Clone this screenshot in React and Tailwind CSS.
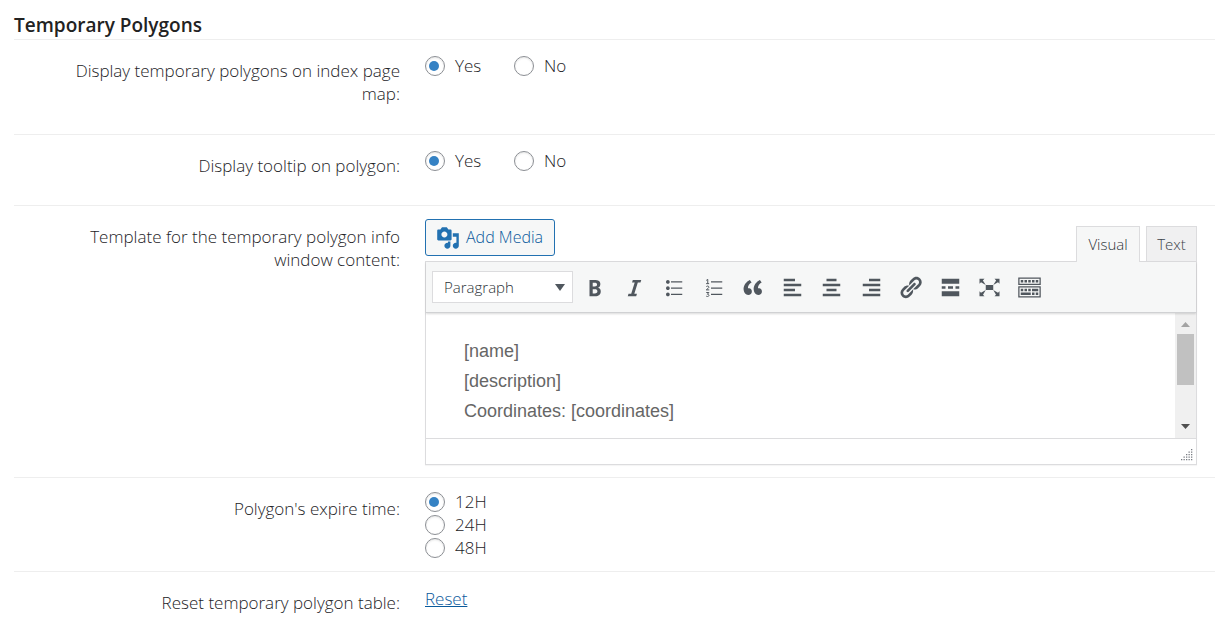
import React from "react";

const ICONS = {
  bold: "M6 4v13h4.54c1.37 0 2.46-.33 3.26-1 .8-.66 1.2-1.58 1.2-2.77 0-.84-.17-1.51-.51-2.01s-.9-.85-1.67-1.03v-.09c.57-.1 1.02-.4 1.36-.9s.51-1.13.51-1.91c0-1.14-.39-1.98-1.17-2.5C12.75 4.26 11.5 4 9.78 4H6zm2.57 5.15V6.26h1.36c.73 0 1.27.11 1.61.32.34.22.51.58.51 1.07 0 .54-.16.92-.47 1.15s-.82.35-1.51.35h-1.5zm0 2.19h1.6c1.44 0 2.16.53 2.16 1.61 0 .6-.17 1.05-.51 1.34s-.86.43-1.57.43H8.57v-3.38z",
  italic: "M14.78 6h-2.13l-2.8 9h2.12l-.62 2H4.6l.62-2h2.14l2.8-9H8.03l.62-2h6.75z",
  bullets: "M5.5 7C4.67 7 4 6.33 4 5.5 4 4.68 4.67 4 5.5 4 6.32 4 7 4.68 7 5.5 7 6.33 6.32 7 5.5 7zM8 5h9v1H8V5zm-2.5 7c-.83 0-1.5-.67-1.5-1.5C4 9.68 4.67 9 5.5 9c.82 0 1.5.68 1.5 1.5 0 .83-.68 1.5-1.5 1.5zM8 10h9v1H8v-1zm-2.5 7c-.83 0-1.5-.67-1.5-1.5 0-.82.67-1.5 1.5-1.5.82 0 1.5.68 1.5 1.5 0 .83-.68 1.5-1.5 1.5zM8 15h9v1H8v-1z",
  quote: "M9.49 13.22c0-.74-.2-1.38-.61-1.9-.62-.78-1.83-.88-2.53-.72-.29-1.65 1.11-3.75 2.92-4.65L7.88 4c-2.73 1.3-5.42 4.28-4.96 8.05C3.21 14.43 4.59 16 6.54 16c.85 0 1.56-.25 2.12-.75s.83-1.18.83-2.03zm8.05 0c0-.74-.2-1.38-.61-1.9-.63-.78-1.83-.88-2.53-.72-.29-1.65 1.11-3.75 2.92-4.65L15.93 4c-2.73 1.3-5.41 4.28-4.95 8.05.29 2.38 1.66 3.95 3.61 3.95.85 0 1.56-.25 2.12-.75s.83-1.18.83-2.03z",
  left: "M12 5V3H3v2h9zm5 4V7H3v2h14zm-5 4v-2H3v2h9zm5 4v-2H3v2h14z",
  center: "M14 5V3H6v2h8zm3 4V7H3v2h14zm-3 4v-2H6v2h8zm3 4v-2H3v2h14z",
  right: "M17 5V3H8v2h9zm0 4V7H3v2h14zm0 4v-2H8v2h9zm0 4v-2H3v2h14z",
  link: "M17.74 2.76c1.68 1.69 1.68 4.41 0 6.1l-1.53 1.52c-1.12 1.12-2.7 1.47-4.14 1.09l2.62-2.61.76-.77.76-.76c.84-.84.84-2.2 0-3.04-.84-.85-2.2-.85-3.04 0l-.77.76-3.38 3.38c-.37-1.44-.02-3.02 1.1-4.14l1.52-1.53c1.69-1.68 4.42-1.68 6.1 0zM8.59 13.43l5.34-5.34c.42-.42.42-1.1 0-1.52-.44-.43-1.13-.39-1.53 0l-5.33 5.34c-.42.42-.42 1.1 0 1.52.44.43 1.13.39 1.52 0zm-.76 2.29l4.14-4.15c.38 1.44.03 3.02-1.09 4.14l-1.52 1.53c-1.69 1.68-4.41 1.68-6.1 0-1.68-1.68-1.68-4.42 0-6.1l1.53-1.52c1.12-1.12 2.7-1.47 4.14-1.1l-4.14 4.15c-.85.84-.85 2.2 0 3.05.84.84 2.2.84 3.04 0z",
  more: "M17 7V3H3v4h14zM6 11V9H3v2h3zm6 0V9H8v2h4zm5 0V9h-3v2h3zm0 6v-4H3v4h14z",
  expand: "M7 8h6v4H7zm-5 5v4h4l-1.2-1.2L7 12l-3.8 2.2zM14 17h4v-4l-1.2 1.2L13 12l2.2 3.8zM14 3l1.3 1.3L13 8l3.8-2.2L18 7V3zM6 3H2v4l1.2-1.2L7 8 4.7 4.3z",
  toggle: "M19 2v6H1V2h18zm-1 5V3H2v4h16zM5 4v2H3V4h2zm3 0v2H6V4h2zm3 0v2H9V4h2zm3 0v2h-2V4h2zm3 0v2h-2V4h2zm2 5v9H1V9h18zm-1 8v-7H2v7h16zM5 11v2H3v-2h2zm3 0v2H6v-2h2zm3 0v2H9v-2h2zm6 0v2h-5v-2h5zm-6 3v2H3v-2h8zm3 0v2h-2v-2h2zm3 0v2h-2v-2h2z",
  media: "M13 11V4c0-.55-.45-1-1-1h-1.67L9 1H5L3.67 3H2c-.55 0-1 .45-1 1v7c0 .55.45 1 1 1h10c.55 0 1-.45 1-1zM7 4.5c1.38 0 2.5 1.12 2.5 2.5S8.38 9.5 7 9.5 4.5 8.38 4.5 7 5.62 4.5 7 4.5zM14 6h5v10.5c0 1.38-1.12 2.5-2.5 2.5S14 17.88 14 16.5s1.12-2.5 2.5-2.5c.17 0 .34.02.5.05V9h-3V6zm-4 8.05V13h2v3.5c0 1.38-1.12 2.5-2.5 2.5S7 17.88 7 16.5 8.12 14 9.5 14c.17 0 .34.02.5.05z",
};

const TOOLS = [
  ["Bold", "bold"],
  ["Italic", "italic"],
  ["Bulleted list", "bullets"],
  ["Numbered list", "numbers"],
  ["Blockquote", "quote"],
  ["Align left", "left"],
  ["Align center", "center"],
  ["Align right", "right"],
  ["Insert link", "link"],
  ["Insert Read More tag", "more"],
  ["Fullscreen", "expand"],
  ["Toolbar Toggle", "toggle"],
];

function Icon({ name, className }) {
  return (
    <svg viewBox="0 0 20 20" className={className} aria-hidden="true" fill="currentColor">
      {name === "numbers" ? (
        <>
          <path d="M8 5h9v1H8zM8 10h9v1H8zM8 15h9v1H8z" />
          <path
            d="M4.2 4.3l1.2-.8v3.4M4.1 6.9h2.4M4.2 9.4c.3-.8 2.1-.8 2.1.3 0 .8-1.3 1.4-2.1 2.2h2.4M4.2 14h2.1l-1.2 1.4c1.8 0 1.6 1.8.1 1.8-.5 0-.8-.1-1.1-.4"
            fill="none"
            stroke="currentColor"
            strokeWidth="0.8"
          />
        </>
      ) : (
        <path d={ICONS[name]} />
      )}
    </svg>
  );
}

function Radio({ name, label, checked, className = "" }) {
  return (
    <label className={`flex items-center gap-[10px] ${className}`}>
      <input
        type="radio"
        name={name}
        defaultChecked={checked}
        className="flex size-5 shrink-0 appearance-none items-center rounded-full border border-[#8c8f94] bg-white shadow-[inset_0_1px_2px_rgba(0,0,0,0.1)] checked:before:ml-[3px] checked:before:size-[10px] checked:before:rounded-full checked:before:bg-[#3582c4] checked:before:content-['']"
      />
      <span>{label}</span>
    </label>
  );
}

function Row({ label, htmlFor, id, children, className = "" }) {
  const Tag = htmlFor ? "label" : "div";
  return (
    <div className={`grid grid-cols-[386px_1fr] gap-[25px] border-b border-[#eeeeee] ${className}`}>
      <Tag id={id} htmlFor={htmlFor} className="pt-[19px] pl-8 text-right">
        {label}
      </Tag>
      {children}
    </div>
  );
}

function YesNo({ name, labelledBy }) {
  return (
    <div role="radiogroup" aria-labelledby={labelledBy} className="flex items-start pt-[14px]">
      <Radio name={name} label="Yes" checked className="w-[89px]" />
      <Radio name={name} label="No" />
    </div>
  );
}

function Editor() {
  return (
    <div className="pt-[13px] pr-[18px] pb-3">
      <div className="flex items-end justify-between">
        <button
          type="button"
          className="mb-[5px] flex h-[37px] w-[130px] items-center gap-[6px] rounded-[3px] border border-[#2271b1] bg-[#f6f7f7] pl-[10px] text-[16px] text-[#0a5a9c]"
        >
          <Icon name="media" className="size-6 text-[#2271b1]" />
          Add Media
        </button>
        <div className="flex gap-[6px] text-[15px] text-[#2c3338]">
          <button
            type="button"
            className="relative z-10 -mb-px h-9 w-16 border border-b-0 border-[#dcdcde] bg-[#f6f7f7]"
          >
            Visual
          </button>
          <button type="button" className="h-[35px] w-[51px] border border-b-0 border-[#dcdcde] bg-[#f0f0f1] text-[#3c434a]">
            Text
          </button>
        </div>
      </div>
      <div className="border border-[#dcdcde] shadow-[0_1px_1px_rgba(0,0,0,0.04)]">
        <div className="relative flex h-[51px] items-center border-b border-[#d0d1d3] bg-[#f6f7f7] pl-[6px] text-[#50575e] shadow-[0_1px_2px_rgba(0,0,0,0.15)]">
          <div className="relative">
            <select
              aria-label="Block format"
              className="block h-8 w-[141px] appearance-none border border-[#dcdcde] bg-white pl-[11px] text-[15px] text-[#2c3338]"
            >
              <option>Paragraph</option>
            </select>
            <svg viewBox="0 0 10 7" className="pointer-events-none absolute top-[13px] right-2 h-[7px] w-[10px]" fill="currentColor" aria-hidden="true">
              <path d="M0 0h10L5 7z" />
            </svg>
          </div>
          <div className="ml-[2px] grid w-[474px] grid-cols-12">
            {TOOLS.map(([title, icon]) => (
              <button key={icon} type="button" aria-label={title} className="flex justify-center">
                <Icon name={icon} className="size-[25px]" />
              </button>
            ))}
          </div>
        </div>
        <div className="flex h-[125px]">
          <textarea
            id="template"
            defaultValue={"[name]\n[description]\nCoordinates: [coordinates]"}
            className="min-w-0 flex-1 resize-none overflow-hidden bg-white pt-[23px] pl-[38px] font-['Liberation_Sans',Arial,sans-serif] text-[18px] leading-[30px] font-normal text-[#666666] outline-none"
          />
          <div className="flex w-[21px] flex-col items-center justify-between bg-[#f0f0f0] pt-px">
            <div className="flex flex-col items-center">
              <svg viewBox="0 0 21 20" className="h-5 w-[21px]" aria-hidden="true">
                <path d="M6 13h9l-4.500-5z" fill="#a3a3a3" />
              </svg>
              <div className="h-[51px] w-[17px] bg-[#c1c1c1]" />
            </div>
            <svg viewBox="0 0 21 20" className="mb-[2px] h-5 w-[21px]" aria-hidden="true">
              <path d="M6 8h9l-4.500 5z" fill="#505050" />
            </svg>
          </div>
        </div>
        <div className="flex h-[26px] items-end justify-end border-t border-[#dcdcde] bg-white pr-[3px] pb-[3px]">
          <svg viewBox="0 0 12 12" className="size-3" fill="#787c82" aria-hidden="true">
            <path d="M10 0h1.300v1.300H10zM7.500 2.500h1.300v1.300H7.500zM10 2.500h1.300v1.300H10zM5 5h1.300v1.300H5zM7.500 5h1.300v1.300H7.500zM10 5h1.300v1.300H10zM2.500 7.500h1.300v1.300H2.500zM5 7.500h1.300v1.300H5zM7.500 7.500h1.300v1.300H7.500zM10 7.500h1.300v1.300H10zM0 10h1.300v1.300H0zM2.500 10h1.300v1.300H2.500zM5 10h1.300v1.300H5zM7.500 10h1.300v1.300H7.500zM10 10h1.300v1.300H10z" />
          </svg>
        </div>
      </div>
    </div>
  );
}

export default function App() {
  return (
    <form className="bg-white pl-[14px] font-['Open_Sans','Noto_Sans',sans-serif] text-[17px] leading-[23px] font-light text-[#1d2327]">
      <h2 className="border-b border-[#eeeeee] pt-[14px] pb-[2px] text-[19px] font-semibold text-[#222222]">
        Temporary Polygons
      </h2>
      <Row id="index-map" label="Display temporary polygons on index page map:" className="pb-[29px]">
        <YesNo name="index-map" labelledBy="index-map" />
      </Row>
      <Row id="tooltip" label="Display tooltip on polygon:" className="pb-7">
        <YesNo name="tooltip" labelledBy="tooltip" />
      </Row>
      <Row label="Template for the temporary polygon info window content:" htmlFor="template">
        <Editor />
      </Row>
      <Row id="expire" label="Polygon's expire time:">
        <div role="radiogroup" aria-labelledby="expire" className="flex flex-col items-start pt-3 pb-3">
          <Radio name="expire" label="12H" checked />
          <Radio name="expire" label="24H" />
          <Radio name="expire" label="48H" />
        </div>
      </Row>
      <Row label="Reset temporary polygon table:" className="border-b-0">
        <div className="pt-[15px]">
          <a href="#reset" className="text-[#0a5a9c] underline">
            Reset
          </a>
        </div>
      </Row>
    </form>
  );
}
